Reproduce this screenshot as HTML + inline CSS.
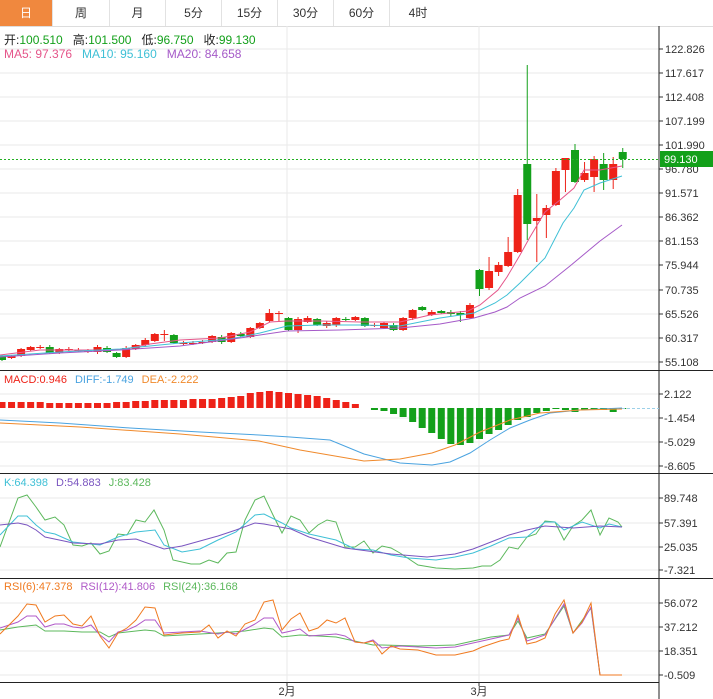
<!DOCTYPE html>
<html><head><meta charset="utf-8"><style>
body{margin:0;width:713px;height:699px;overflow:hidden;background:#fff;font-family:"Liberation Sans","Noto Sans CJK SC",sans-serif;}
.tabs{position:absolute;top:0;left:0;width:713px;height:26px;border-bottom:1px solid #ddd;}
.tab{position:absolute;top:0;height:26px;line-height:26px;text-align:center;font-size:12px;color:#333;border-right:1px solid #e2e2e2;}
.tab.on{background:#f0883e;color:#fff;}
</style></head><body>
<div class="tabs">
<div class="tab on" style="left:0;width:52px">日</div>
<div class="tab" style="left:53px;width:56px">周</div>
<div class="tab" style="left:110px;width:55px">月</div>
<div class="tab" style="left:166px;width:55px">5分</div>
<div class="tab" style="left:222px;width:55px">15分</div>
<div class="tab" style="left:278px;width:55px">30分</div>
<div class="tab" style="left:334px;width:55px">60分</div>
<div class="tab" style="left:390px;width:56px;border-right:none">4时</div>
</div>
<svg id="s" width="713" height="699" style="position:absolute;top:0;left:0" font-family="Liberation Sans, Noto Sans CJK SC, sans-serif">
</svg>
<script>
var s=document.getElementById('s'),h='';
function L(x1,y1,x2,y2,c,w,d){h+='<line x1="'+x1+'" y1="'+y1+'" x2="'+x2+'" y2="'+y2+'" stroke="'+c+'" stroke-width="'+(w||1)+'"'+(d?' stroke-dasharray="'+d+'"':'')+'/>';}
function T(x,y,t,c,sz,a){h+='<text x="'+x+'" y="'+y+'" fill="'+c+'" font-size="'+(sz||11)+'"'+(a?' text-anchor="'+a+'"':'')+'>'+t+'</text>';}
function P(pts,c){h+='<polyline fill="none" stroke="'+c+'" stroke-width="1" points="'+pts.map(function(p){return p.join(',')}).join(' ')+'"/>';}
var G='#eaeaea',R='#ee2218',GR='#13a01a';
var pl=[['122.826',49],['117.617',73],['112.408',97],['107.199',121],['101.990',145],['96.780',169],['91.571',193],['86.362',217],['81.153',241],['75.944',265],['70.735',290],['65.526',314],['60.317',338],['55.108',362]];
pl.forEach(function(p){L(0,p[1],659,p[1],G);L(659,p[1],663,p[1],'#333');T(665,p[1]+4,p[0],'#333');});
var ml=[['2.122',394],['-1.454',418],['-5.029',442],['-8.605',466]];
ml.forEach(function(p){L(0,p[1],659,p[1],G);L(659,p[1],663,p[1],'#333');T(664,p[1]+4,p[0],'#333');});
var kl=[['89.748',498],['57.391',523],['25.035',547],['-7.321',570]];
kl.forEach(function(p){L(0,p[1],659,p[1],G);L(659,p[1],663,p[1],'#333');T(664,p[1]+4,p[0],'#333');});
var rl=[['56.072',603],['37.212',627],['18.351',651],['-0.509',675]];
rl.forEach(function(p){L(0,p[1],659,p[1],G);L(659,p[1],663,p[1],'#333');T(664,p[1]+4,p[0],'#333');});
L(287,26,287,682,G);L(479,26,479,682,G);
L(659,26,659,699,'#222');
L(0,370.5,713,370.5,'#222');L(0,473.5,713,473.5,'#222');L(0,578.5,713,578.5,'#222');L(0,682.5,659,682.5,'#222');
L(287,682,287,686,'#333');L(479,682,479,686,'#333');
T(287,695,'2月','#333',11,'middle');T(479,695,'3月','#333',11,'middle');
var c=[[356,360,355,361,0],[356,358,355,359,1],[349,356,348,357,1],[347,350,346,351,1],[347,348,345,349,1],[347,353,345,354,0],[349,353,348,354,1],[349,350,347,351,1],[350,351,348,352,1],[351,352,349,353,1],[347,352,345,354,1],[348,352,346,353,0],[353,357,352,358,0],[348,357,346,358,1],[345,349,344,350,1],[340,345,338,346,1],[334,341,333,342,1],[334,335,330,341,1],[335,343,334,344,0],[343,344,341,345,1],[343,344,341,345,1],[342,343,340,344,1],[336,342,335,343,1],[337,342,335,344,0],[333,342,332,343,1],[334,336,332,337,0],[328,337,327,338,1],[323,328,322,329,1],[313,321,309,322,1],[313,314,311,322,1],[318,330,317,331,0],[319,330,317,333,1],[318,322,316,323,1],[319,325,318,326,0],[323,326,321,328,1],[318,325,317,327,1],[319,320,317,321,0],[317,320,316,321,1],[318,326,317,327,0],[325,326,323,327,1],[323,328,322,329,1],[325,330,323,331,0],[318,330,317,331,1],[310,318,309,320,1],[307,310,306,311,0],[312,315,310,316,1],[311,313,310,314,0],[312,314,310,316,0],[313,315,311,322,0],[305,318,303,319,1],[270,289,269,296,0],[271,288,257,290,1],[265,272,262,276,1],[252,266,237,267,1],[195,252,189,253,1],[164,224,65,240,0],[218,221,194,262,1],[208,215,205,238,1],[171,205,168,206,1],[158,170,158,192,1],[150,182,144,183,0],[173,180,162,182,1],[159,177,156,192,1],[164,180,153,190,0],[164,180,157,189,1],[152,159,148,168,0]];
function X(i){return 2+i*9.55;}
c.forEach(function(k,i){var x=X(i),col=k[4]?R:GR;L(x,k[2],x,k[3],col);var bh=Math.max(1,k[1]-k[0]);h+='<rect x="'+(x-4)+'" y="'+k[0]+'" width="8" height="'+bh+'" fill="'+col+'"/>';});
P([[0,355],[40,350],[80,350],[120,350],[150,344],[180,340],[220,338],[250,332],[270,322],[287,321],[320,321],[360,322],[400,322],[430,315],[468,311],[480,305],[498,290],[507,277],[520,255],[530,237],[545,212],[560,200],[574,188],[584,170],[600,170],[622,166]],'#e5558a');
P([[0,356],[60,352],[120,349],[180,343],[230,339],[260,333],[287,326],[320,325],[360,325],[400,326],[440,318],[474,313],[495,303],[507,295],[520,283],[545,258],[563,223],[574,208],[584,190],[600,183],[622,176]],'#3fc0d6');
P([[0,357],[60,353],[120,350],[180,346],[240,338],[287,331],[340,330],[400,328],[440,324],[474,318],[495,312],[507,307],[520,298],[545,286],[570,266],[600,241],[622,225]],'#a55ac8');
L(0,159.5,659,159.5,'#22b022',1,'2,2');
h+='<rect x="660" y="151" width="53" height="16" fill="'+GR+'"/>';T(664,163,'99.130','#fff');
var mb=[6,6,6,6,6,5,5,5,5,5,5,5,6,6,7,7,8,8,8,8,9,9,9,10,11,12,15,16,17,16,15,14,13,12,10,8,6,4];
mb.forEach(function(v,i){h+='<rect x="'+(X(i)-3.5)+'" y="'+(408-v)+'" width="7" height="'+v+'" fill="'+R+'"/>';});
var gb=[0,2,3,6,9,14,20,25,31,36,37,35,31,26,22,17,12,9,5,3,1,2,4,2,1,2,4,1];
gb.forEach(function(v,j){var i=38+j;if(v>0)h+='<rect x="'+(X(i)-3.5)+'" y="408" width="7" height="'+v+'" fill="'+GR+'"/>';});
L(622,408.5,659,408.5,'#9cd0e8',1,'3,2');
P([[0,420],[60,423],[130,428],[200,432],[259,435],[290,437],[330,440],[364,454],[400,463],[432,465],[450,462],[470,453],[490,440],[510,428],[530,420],[550,413],[580,410],[622,408]],'#4aa3e0');
P([[0,423],[80,427],[180,434],[259,441],[300,450],[364,461],[400,459],[432,453],[455,445],[480,432],[510,420],[540,413],[580,410],[622,409]],'#f08a2c');
P([[0,547],[18,498],[27,495],[36,507],[45,520],[55,517],[64,525],[73,545],[82,546],[91,543],[100,554],[109,551],[118,534],[127,535],[136,520],[145,522],[154,510],[164,530],[173,560],[191,564],[200,564],[209,560],[218,563],[227,553],[236,552],[245,520],[255,500],[264,496],[273,515],[282,533],[291,516],[300,520],[309,533],[318,525],[327,520],[336,522],[345,547],[355,547],[364,541],[373,553],[382,546],[391,548],[400,553],[418,565],[436,568],[455,569],[473,568],[482,566],[491,566],[500,560],[509,547],[518,549],[527,537],[536,534],[545,521],[555,522],[564,540],[573,526],[582,520],[591,510],[600,535],[609,518],[618,522],[622,527]],'#5cb85c');
P([[0,535],[18,516],[27,516],[36,525],[45,532],[55,534],[73,542],[82,543],[100,545],[118,537],[136,532],[155,530],[164,545],[182,552],[200,549],[218,540],[236,532],[255,515],[264,514],[282,523],[291,528],[309,534],[336,540],[355,549],[373,550],[391,555],[409,558],[436,560],[455,557],[473,553],[491,546],[509,538],[527,537],[545,522],[555,522],[564,530],[582,522],[600,528],[609,524],[622,527]],'#3fc0d6');
P([[0,525],[18,523],[27,525],[36,530],[45,537],[64,541],[73,543],[100,544],[118,540],[136,539],[164,549],[182,546],[200,541],[218,536],[236,530],[255,523],[264,524],[291,529],[309,537],[345,548],[391,554],[427,557],[455,554],[473,549],[491,542],[509,535],[527,530],[545,526],[573,528],[600,526],[622,527]],'#7a55c0');
P([[0,630],[18,627],[36,625],[45,631],[64,631],[82,632],[100,632],[109,637],[118,633],[145,630],[155,631],[164,636],[218,633],[245,631],[264,628],[273,629],[282,637],[300,635],[336,637],[373,645],[382,645],[418,646],[455,645],[473,641],[491,637],[509,635],[518,621],[527,638],[545,634],[564,606],[573,633],[591,608],[600,675],[622,675]],'#5cb85c');
P([[0,628],[18,622],[27,616],[36,616],[45,627],[55,624],[64,624],[73,627],[82,628],[91,625],[100,635],[109,642],[118,632],[127,630],[136,626],[145,620],[155,620],[164,633],[200,631],[218,634],[227,632],[236,634],[255,624],[264,618],[273,618],[282,633],[300,629],[309,636],[336,634],[345,636],[355,642],[364,643],[373,640],[382,648],[400,646],[436,648],[455,647],[473,643],[491,639],[509,635],[518,618],[527,641],[545,635],[564,604],[573,633],[582,623],[591,607],[600,675],[622,675]],'#b05ac8');
P([[0,634],[18,616],[27,604],[36,605],[45,622],[55,616],[64,615],[73,624],[82,626],[91,616],[100,636],[109,648],[118,633],[127,628],[136,620],[145,607],[155,608],[164,635],[182,633],[200,632],[209,625],[218,638],[227,631],[236,636],[245,624],[255,620],[264,602],[273,600],[282,630],[291,619],[300,613],[309,631],[318,628],[327,620],[336,623],[345,618],[355,642],[364,643],[373,641],[382,654],[391,646],[400,649],[418,650],[436,655],[455,655],[473,651],[482,647],[491,644],[500,641],[509,639],[518,615],[527,644],[536,642],[545,638],[555,614],[564,600],[573,633],[582,622],[591,603],[600,675],[622,675]],'#f07a20');
h+='<text x="4" y="44" font-size="12"><tspan fill="#222">开:</tspan><tspan fill="#13a01a">100.510</tspan><tspan fill="#222" dx="10">高:</tspan><tspan fill="#13a01a">101.500</tspan><tspan fill="#222" dx="10">低:</tspan><tspan fill="#13a01a">96.750</tspan><tspan fill="#222" dx="10">收:</tspan><tspan fill="#13a01a">99.130</tspan></text>';
h+='<text x="4" y="58" font-size="12"><tspan fill="#e5558a">MA5: 97.376</tspan><tspan fill="#3fc0d6" dx="10">MA10: 95.160</tspan><tspan fill="#a55ac8" dx="10">MA20: 84.658</tspan></text>';
h+='<text x="4" y="383" font-size="11"><tspan fill="#ee2218">MACD:0.946</tspan><tspan fill="#4aa3e0" dx="8">DIFF:-1.749</tspan><tspan fill="#f08a2c" dx="8">DEA:-2.222</tspan></text>';
h+='<text x="4" y="486" font-size="11"><tspan fill="#3fc0d6">K:64.398</tspan><tspan fill="#7a55c0" dx="8">D:54.883</tspan><tspan fill="#5cb85c" dx="8">J:83.428</tspan></text>';
h+='<text x="4" y="590" font-size="11"><tspan fill="#f07a20">RSI(6):47.378</tspan><tspan fill="#b05ac8" dx="8">RSI(12):41.806</tspan><tspan fill="#5cb85c" dx="8">RSI(24):36.168</tspan></text>';
s.innerHTML=h;
</script>
</body></html>
